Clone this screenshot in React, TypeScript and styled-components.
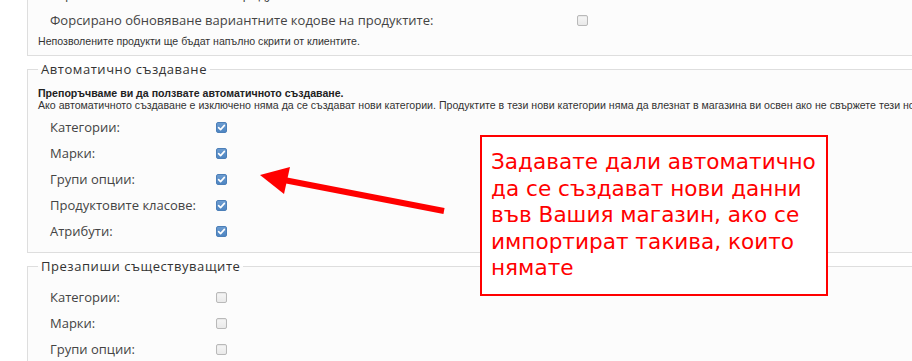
import React from 'react';
import styled, { createGlobalStyle } from 'styled-components';

interface Option {
  label: string;
  checked: boolean;
}

const GlobalStyle = createGlobalStyle`
  html, body {
    margin: 0;
    padding: 0;
    background: #ffffff;
    overflow: hidden;
  }
`;

const Screen = styled.div`
  position: relative;
  width: 912px;
  height: 361px;
  overflow: hidden;
  font-family: 'Open Sans', 'Noto Sans', sans-serif;
  color: #444;
`;

const Form = styled.div`
  margin-top: -29px;
  padding-left: 27px;
`;

const Fieldset = styled.fieldset`
  margin: 0 -80px 4px 0;
  padding: 9px 10px 8px;
  border: 1px solid #dedede;
  background: #fcfcfc;
  min-width: 0;
`;

const Legend = styled.legend`
  padding: 0 3px;
  font-size: 13px;
  line-height: 18px;
  letter-spacing: 0.55px;
  color: #333;
`;

const Note = styled.div<{ $strong?: boolean }>`
  font-family: 'Liberation Sans', Arial, sans-serif;
  font-size: 10.6px;
  line-height: 12px;
  white-space: nowrap;
  color: ${(p) => (p.$strong ? '#222' : '#333')};
  font-weight: ${(p) => (p.$strong ? 'bold' : 'normal')};
`;

const NoteBlock = styled.div<{ $gap: 'top' | 'bottom' }>`
  margin: ${(p) => (p.$gap === 'top' ? '2px 0 0' : '0 0 3px')};
`;

const Row = styled.div<{ $labelWidth: number }>`
  display: grid;
  grid-template-columns: ${(p) => p.$labelWidth}px 12px;
  align-items: center;
  height: 26px;
  padding-left: 12px;
`;

const Label = styled.span`
  font-size: 13px;
  white-space: nowrap;
  color: #444;
`;

const Box = styled.span<{ $checked: boolean }>`
  display: flex;
  align-items: center;
  justify-content: center;
  box-sizing: border-box;
  width: 11px;
  height: 11px;
  border-radius: 2px;
  border: 1px solid ${(p) => (p.$checked ? '#4c7fb8' : '#b9b9b9')};
  background: ${(p) =>
    p.$checked
      ? 'linear-gradient(#6b9bd0, #4f86c2)'
      : 'linear-gradient(#f6f6f6, #e9e9e9)'};
  box-shadow: ${(p) =>
    p.$checked ? 'none' : 'inset 0 1px 1px rgba(0,0,0,0.06)'};
`;

const Callout = styled.div`
  position: absolute;
  left: 480px;
  top: 135px;
  box-sizing: border-box;
  width: 348px;
  height: 161px;
  padding: 12px 6px 0 9px;
  border: 2px solid #ff0000;
  background: #ffffff;
  font-family: 'DejaVu Sans', Verdana, sans-serif;
  font-size: 21.6px;
  line-height: 26.5px;
  color: #ff0000;
  white-space: nowrap;
`;

const ArrowLayer = styled.svg`
  position: absolute;
  left: 0;
  top: 0;
  pointer-events: none;
`;

const Checkbox: React.FC<{ checked: boolean }> = ({ checked }) => (
  <Box $checked={checked}>
    {checked && (
      <svg width="9" height="9" viewBox="0 0 9 9">
        <path
          d="M1.6 4.6 L3.6 6.6 L7.4 2.4"
          fill="none"
          stroke="#ffffff"
          strokeWidth="1.6"
          strokeLinecap="round"
          strokeLinejoin="round"
        />
      </svg>
    )}
  </Box>
);

const OptionRows: React.FC<{ items: Option[]; labelWidth: number }> = ({
  items,
  labelWidth,
}) => (
  <>
    {items.map((item) => (
      <Row key={item.label} $labelWidth={labelWidth}>
        <Label>{item.label}</Label>
        <Checkbox checked={item.checked} />
      </Row>
    ))}
  </>
);

const productOptions: Option[] = [
  { label: 'Скриване на непозволените продукти от магазина:', checked: false },
  { label: 'Форсирано обновяване вариантните кодове на продуктите:', checked: false },
];

const entities = [
  'Категории:',
  'Марки:',
  'Групи опции:',
  'Продуктовите класове:',
  'Атрибути:',
];

const App: React.FC = () => {
  const autoCreate = entities.map((label) => ({ label, checked: true }));
  const overwrite = entities.map((label) => ({ label, checked: false }));

  return (
    <Screen>
      <GlobalStyle />
      <Form>
        <Fieldset>
          <OptionRows items={productOptions} labelWidth={527} />
          <NoteBlock $gap="top">
            <Note>Непозволените продукти ще бъдат напълно скрити от клиентите.</Note>
          </NoteBlock>
        </Fieldset>

        <Fieldset>
          <Legend>Автоматично създаване</Legend>
          <NoteBlock $gap="bottom">
            <Note $strong>Препоръчваме ви да ползвате автоматичното създаване.</Note>
            <Note>
              Ако автоматичното създаване е изключено няма да се създават нови
              категории. Продуктите в тези нови категории няма да влезнат в
              магазина ви освен ако не свържете тези нови категории с
              категориите от магазина.
            </Note>
          </NoteBlock>
          <OptionRows items={autoCreate} labelWidth={166} />
        </Fieldset>

        <Fieldset>
          <Legend>Презапиши съществуващите</Legend>
          <OptionRows items={overwrite} labelWidth={166} />
        </Fieldset>
      </Form>

      <ArrowLayer width="912" height="361" viewBox="0 0 912 361">
        <line x1="444" y1="211" x2="284" y2="180" stroke="#ff0000" strokeWidth="6" />
        <polygon points="260,175 290,167 284,194" fill="#ff0000" />
      </ArrowLayer>

      <Callout>
        Задавате дали автоматично
        <br />
        да се създават нови данни
        <br />
        във Вашия магазин, ако се
        <br />
        импортират такива, които
        <br />
        нямате
      </Callout>
    </Screen>
  );
};

export default App;
